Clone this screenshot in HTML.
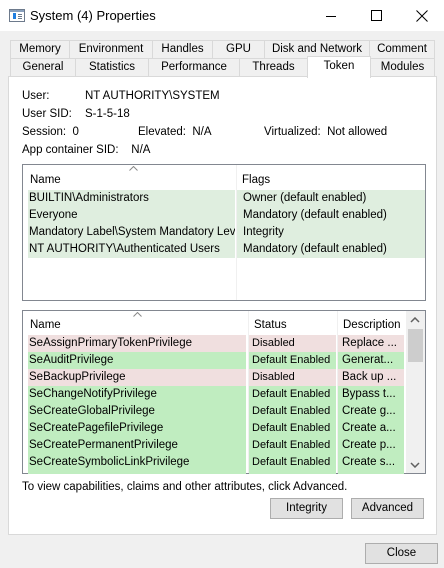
<!DOCTYPE html>
<html><head><style>
*{margin:0;padding:0;box-sizing:border-box}
body{width:444px;height:568px;background:#f0f0f0;font-family:"Liberation Sans",sans-serif;font-size:11.5px;color:#000;position:relative;overflow:hidden}
.a{position:absolute;white-space:nowrap}
.tab{position:absolute;border:1px solid #d9d9d9;border-bottom:none;background:#f0f0f0;text-align:center;line-height:17px;font-size:11.5px}
.btn{position:absolute;border:1px solid #adadad;background:#e1e1e1;text-align:center;line-height:19px}
.list{position:absolute;border:1px solid #828790;background:#fff;overflow:hidden}
.row{position:absolute;height:17px;line-height:17px}
.c{position:absolute;top:0;height:17px;line-height:17px;padding-left:6px;overflow:hidden;white-space:nowrap}
.hd{position:absolute;line-height:16px;padding-left:6px}
</style></head><body>
<div class="a" style="left:0;top:0;width:444px;height:31px;background:#fff"></div>
<svg class="a" style="left:9px;top:9px" width="16" height="13"><rect x="0.5" y="0.5" width="15" height="12" fill="#fff" stroke="#6d7a8c"/><rect x="1" y="1" width="14" height="2" fill="#8aa0bd"/><rect x="4" y="4" width="3" height="6" fill="#1f7ee0"/><rect x="9" y="5" width="4" height="1" fill="#6d7a8c"/><rect x="9" y="7" width="4" height="1" fill="#6d7a8c"/><rect x="9" y="9" width="4" height="1" fill="#6d7a8c"/></svg>
<div class="a" style="left:30px;top:8px;font-size:13px">System (4) Properties</div>
<div class="a" style="left:326px;top:16px;width:10px;height:1px;background:#000"></div>
<div class="a" style="left:371px;top:10px;width:11px;height:11px;border:1px solid #000"></div>
<svg class="a" style="left:416px;top:10px" width="12" height="12"><path d="M0.5 0.5L11.5 11.5M11.5 0.5L0.5 11.5" stroke="#000" stroke-width="1"/></svg>

<div class="tab" style="left:10px;top:40px;width:60px">Memory</div>
<div class="tab" style="left:69px;top:40px;width:84px">Environment</div>
<div class="tab" style="left:152px;top:40px;width:61px">Handles</div>
<div class="tab" style="left:212px;top:40px;width:53px">GPU</div>
<div class="tab" style="left:264px;top:40px;width:106px">Disk and Network</div>
<div class="tab" style="left:369px;top:40px;width:66px">Comment</div>
<div class="tab" style="left:10px;top:58px;width:66px">General</div>
<div class="tab" style="left:75px;top:58px;width:74px">Statistics</div>
<div class="tab" style="left:148px;top:58px;width:92px">Performance</div>
<div class="tab" style="left:239px;top:58px;width:69px">Threads</div>
<div class="tab" style="left:370px;top:58px;width:65px">Modules</div>
<div class="a" style="left:8px;top:76px;width:429px;height:459px;background:#fff;border:1px solid #d9d9d9"></div>
<div class="tab" style="left:307px;top:56px;width:64px;height:22px;background:#fff;border-color:#d9d9d9;line-height:19px">Token</div>

<div class="a" style="left:22px;top:90px">User:</div>
<div class="a" style="left:85px;top:90px">NT AUTHORITY\SYSTEM</div>
<div class="a" style="left:22px;top:108px">User SID:</div>
<div class="a" style="left:85px;top:108px">S-1-5-18</div>
<div class="a" style="left:22px;top:126px">Session:&nbsp; 0</div>
<div class="a" style="left:138px;top:126px">Elevated:&nbsp; N/A</div>
<div class="a" style="left:264px;top:126px">Virtualized:&nbsp; Not allowed</div>
<div class="a" style="left:22px;top:144px">App container SID:&nbsp;&nbsp;&nbsp; N/A</div>

<div class="list" style="left:22px;top:164px;width:404px;height:137px">
<div class="a" style="left:213px;top:0;width:1px;height:135px;background:#f0f0f0"></div>
<svg class="a" style="left:106px;top:1px" width="9" height="5"><path d="M0.5 4.5L4.5 0.5L8.5 4.5" stroke="#888" fill="none"/></svg>
<div class="hd" style="left:1px;top:7px">Name</div>
<div class="hd" style="left:213px;top:7px">Flags</div>
<div class="row" style="left:5px;top:25px;width:416px"><div class="c" style="left:0;width:207px;background:#dfeedf;padding-left:1px">BUILTIN\Administrators</div><div class="c" style="left:209px;width:207px;background:#dfeedf">Owner (default enabled)</div></div>
<div class="row" style="left:5px;top:42px;width:416px"><div class="c" style="left:0;width:207px;background:#dfeedf;padding-left:1px">Everyone</div><div class="c" style="left:209px;width:207px;background:#dfeedf">Mandatory (default enabled)</div></div>
<div class="row" style="left:5px;top:59px;width:416px"><div class="c" style="left:0;width:207px;background:#dfeedf;padding-left:1px">Mandatory Label\System Mandatory Level</div><div class="c" style="left:209px;width:207px;background:#dfeedf">Integrity</div></div>
<div class="row" style="left:5px;top:76px;width:416px"><div class="c" style="left:0;width:207px;background:#dfeedf;padding-left:1px">NT AUTHORITY\Authenticated Users</div><div class="c" style="left:209px;width:207px;background:#dfeedf">Mandatory (default enabled)</div></div>
</div>

<div class="list" style="left:22px;top:310px;width:404px;height:164px">
<div class="a" style="left:225px;top:0;width:1px;height:162px;background:#f0f0f0"></div>
<div class="a" style="left:314px;top:0;width:1px;height:162px;background:#f0f0f0"></div>
<svg class="a" style="left:110px;top:1px" width="9" height="5"><path d="M0.5 4.5L4.5 0.5L8.5 4.5" stroke="#888" fill="none"/></svg>
<div class="hd" style="left:1px;top:6px">Name</div>
<div class="hd" style="left:225px;top:6px">Status</div>
<div class="hd" style="left:314px;top:6px">Description</div>
<div class="a" style="left:383px;top:0;width:19px;height:162px;background:#f0f0f0"></div>
<div class="a" style="left:385px;top:18px;width:15px;height:33px;background:#cdcdcd"></div>
<svg class="a" style="left:387px;top:6px" width="10" height="6"><path d="M1 5L5 1L9 5" stroke="#606060" stroke-width="1.5" fill="none"/></svg>
<svg class="a" style="left:387px;top:151px" width="10" height="6"><path d="M1 1L5 5L9 1" stroke="#606060" stroke-width="1.5" fill="none"/></svg>
</div>
<div id="priv"></div>
<script>
var d=[["SeAssignPrimaryTokenPrivilege","Disabled","Replace ...",0],["SeAuditPrivilege","Default Enabled","Generat...",1],["SeBackupPrivilege","Disabled","Back up ...",0],["SeChangeNotifyPrivilege","Default Enabled","Bypass t...",1],["SeCreateGlobalPrivilege","Default Enabled","Create g...",1],["SeCreatePagefilePrivilege","Default Enabled","Create a...",1],["SeCreatePermanentPrivilege","Default Enabled","Create p...",1],["SeCreateSymbolicLinkPrivilege","Default Enabled","Create s...",1],["","","",1]];
var h="";d.forEach(function(r,i){var bg=r[3]?"#c0edc0":"#f0dfdf";var t=335+i*17;var hh=i==8?3:17;
h+='<div class="c" style="left:28px;top:'+t+'px;width:218px;height:'+hh+'px;background:'+bg+';padding-left:1px">'+r[0]+'</div>';
h+='<div class="c" style="left:249px;top:'+t+'px;width:87px;height:'+hh+'px;background:'+bg+';padding-left:3px;font-size:11px">'+r[1]+'</div>';
h+='<div class="c" style="left:338px;top:'+t+'px;width:66px;height:'+hh+'px;background:'+bg+';padding-left:4px">'+r[2]+'</div>';});
document.getElementById("priv").innerHTML=h;
</script>

<div class="a" style="left:22px;top:481px">To view capabilities, claims and other attributes, click Advanced.</div>
<div class="btn" style="left:270px;top:498px;width:73px;height:21px">Integrity</div>
<div class="btn" style="left:351px;top:498px;width:73px;height:21px">Advanced</div>
<div class="btn" style="left:365px;top:543px;width:73px;height:21px">Close</div>
</body></html>
